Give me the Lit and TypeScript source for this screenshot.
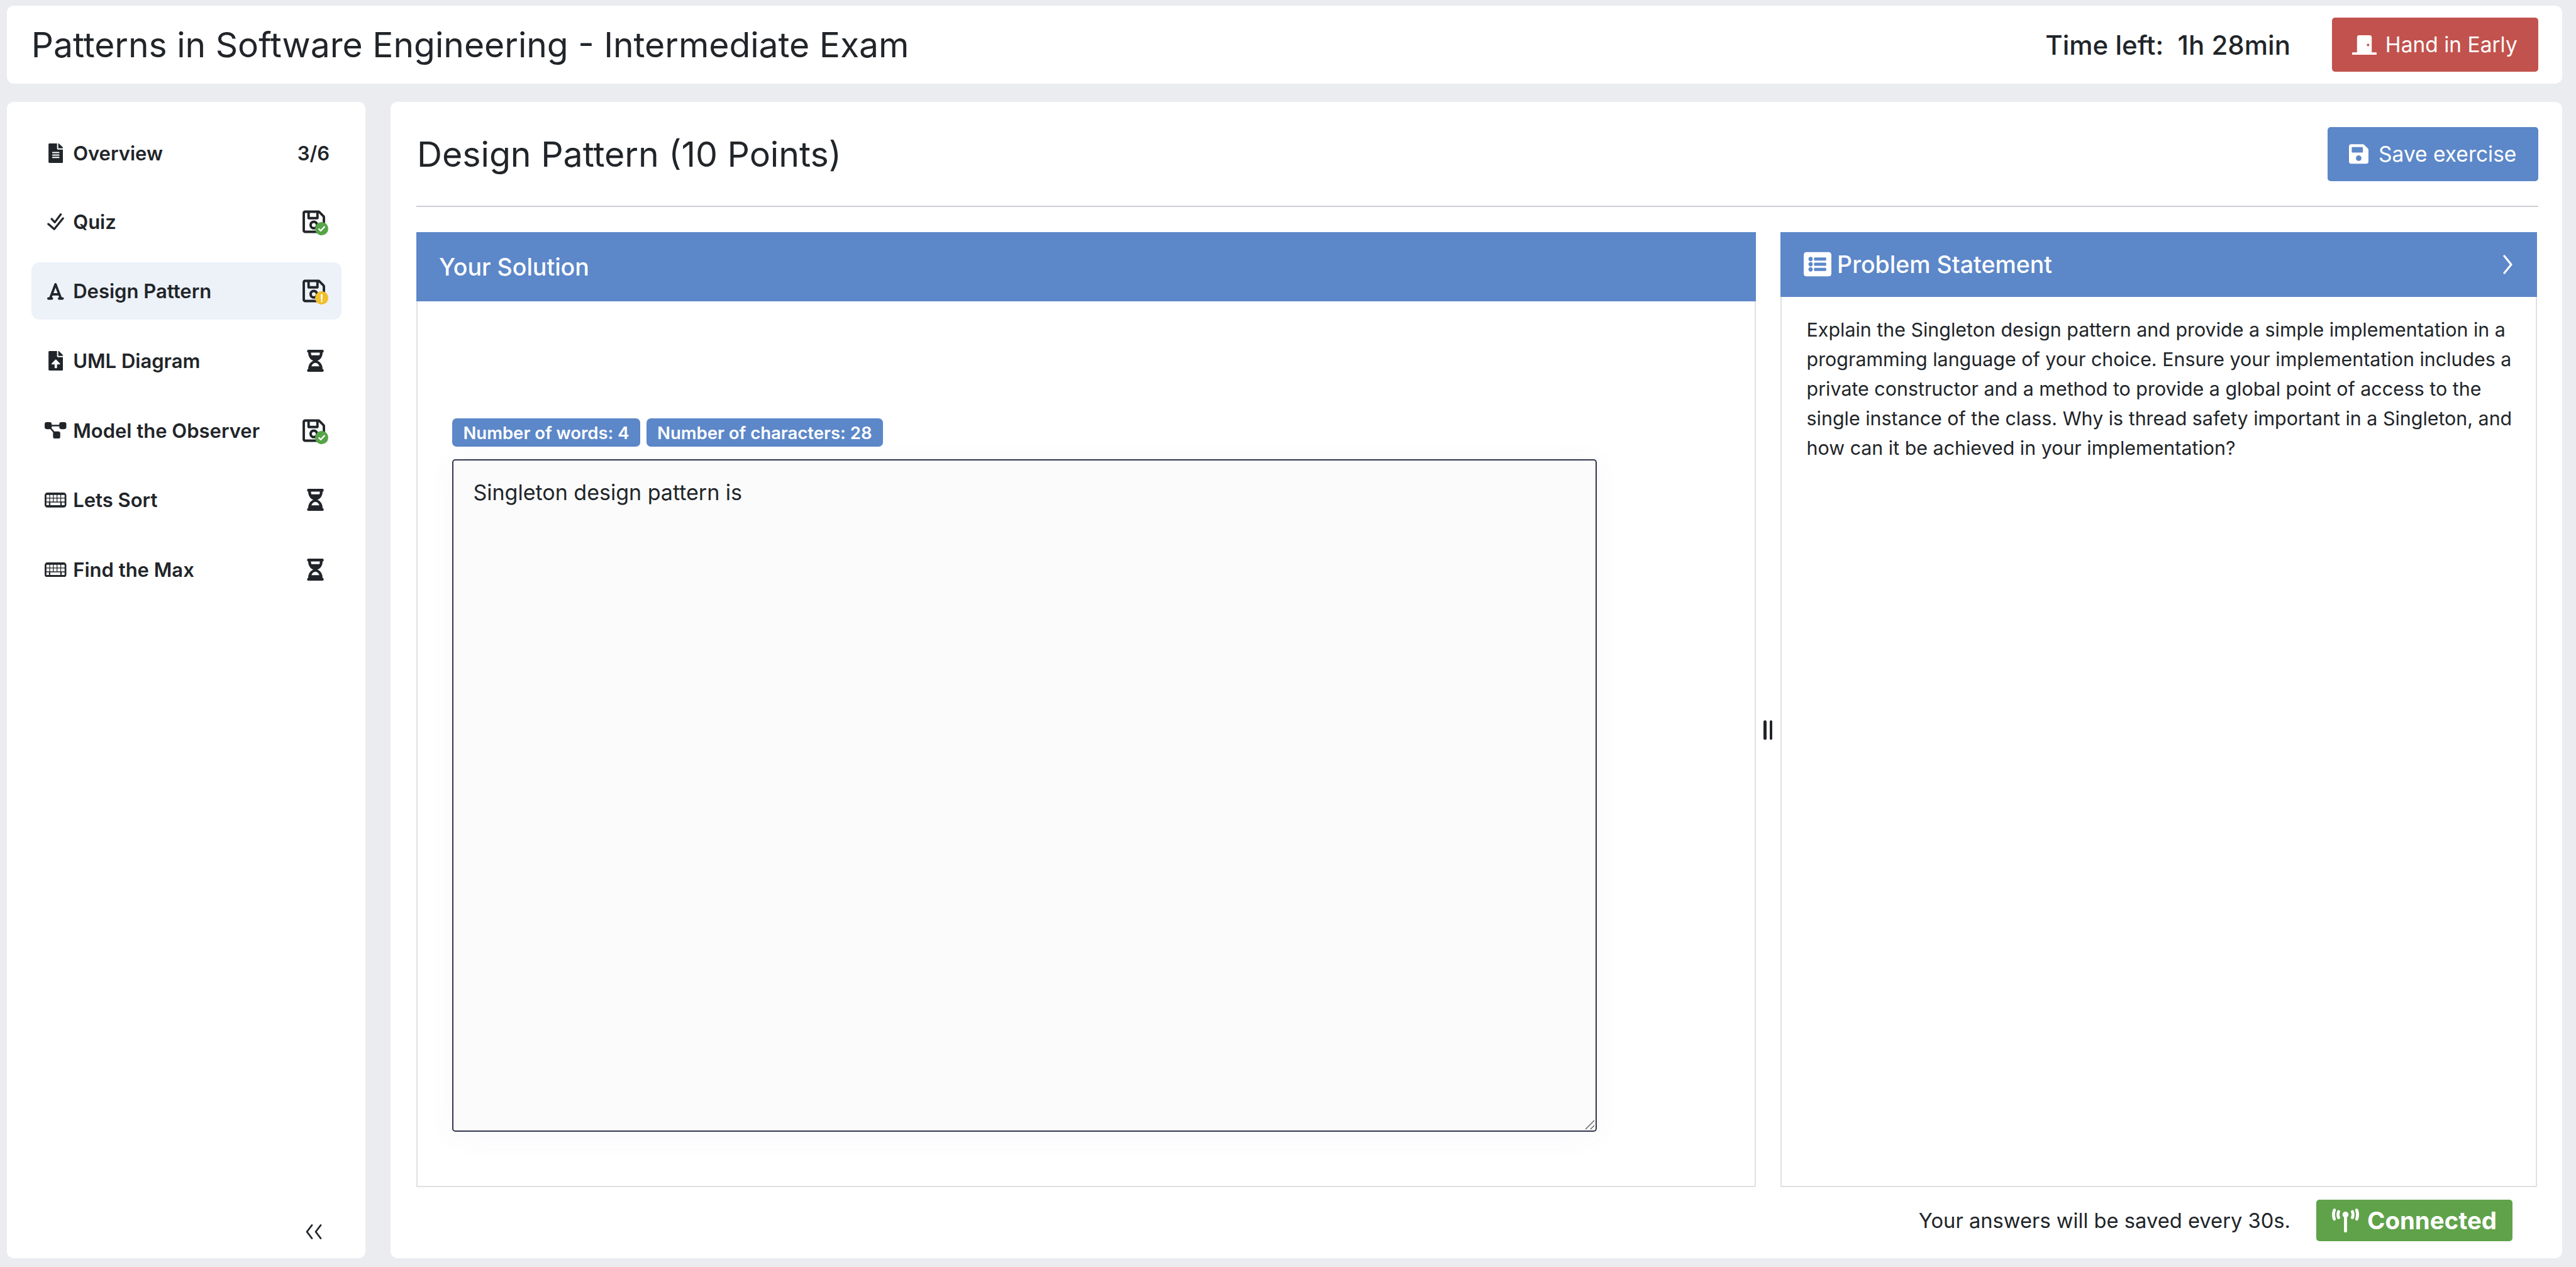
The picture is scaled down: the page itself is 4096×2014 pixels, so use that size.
import { LitElement, html, css } from "lit";
import { customElement } from "lit/decorators.js";

const P = {
  fileLines: "M224 136V0H24C10.7 0 0 10.7 0 24v464c0 13.3 10.7 24 24 24h336c13.3 0 24-10.7 24-24V160H248c-13.2 0-24-10.8-24-24zm64 236c0 6.6-5.4 12-12 12H108c-6.6 0-12-5.4-12-12v-8c0-6.6 5.4-12 12-12h168c6.6 0 12 5.4 12 12v8zm0-64c0 6.6-5.4 12-12 12H108c-6.6 0-12-5.4-12-12v-8c0-6.6 5.4-12 12-12h168c6.6 0 12 5.4 12 12v8zm0-72v8c0 6.6-5.4 12-12 12H108c-6.6 0-12-5.4-12-12v-8c0-6.6 5.4-12 12-12h168c6.6 0 12 5.4 12 12zm96-114.1v6.1H256V0h6.1c6.4 0 12.5 2.5 17 7l97.9 98c4.5 4.5 7 10.6 7 16.9z",
  fileUpload: "M224 136V0H24C10.7 0 0 10.7 0 24v464c0 13.3 10.7 24 24 24h336c13.3 0 24-10.7 24-24V160H248c-13.2 0-24-10.8-24-24zm65.18 216.01H224v80c0 8.84-7.16 16-16 16h-32c-8.84 0-16-7.16-16-16v-80H94.82c-14.28 0-21.41-17.29-11.27-27.36l96.42-95.7c6.65-6.61 17.39-6.61 24.04 0l96.42 95.7c10.15 10.07 3.03 27.36-11.25 27.36zM377 105L279.1 7c-4.5-4.5-10.6-7-17-7H256v128h128v-6.1c0-6.3-2.5-12.4-7-16.9z",
  font: "M254 52.8C249.3 40.3 237.3 32 224 32s-25.3 8.3-30 20.8L57.8 416H32c-17.7 0-32 14.3-32 32s14.3 32 32 32h96c17.7 0 32-14.3 32-32s-14.3-32-32-32h-1.8l18-48H303.8l18 48H320c-17.7 0-32 14.3-32 32s14.3 32 32 32h96c17.7 0 32-14.3 32-32s-14.3-32-32-32H390.2L254 52.8zM279.8 304H168.2L224 155.1 279.8 304z",
  hourglass: "M360 0H24C10.745 0 0 10.745 0 24v16c0 13.255 10.745 24 24 24 0 90.965 51.016 167.734 120.842 192C75.016 280.266 24 357.035 24 448c-13.255 0-24 10.745-24 24v16c0 13.255 10.745 24 24 24h336c13.255 0 24-10.745 24-24v-16c0-13.255-10.745-24-24-24 0-90.965-51.016-167.734-120.842-192C308.984 231.734 360 154.965 360 64c13.255 0 24-10.745 24-24V24c0-13.255-10.745-24-24-24zm-75.078 384H99.08c17.059-46.797 52.096-80 92.92-80 40.821 0 75.862 33.196 92.922 80zm.019-256H99.078C91.988 108.548 88 86.748 88 64h208c0 22.805-3.987 44.587-11.059 64z",
  saveReg: "M433.941 129.941l-83.882-83.882A48 48 0 0 0 316.118 32H48C21.49 32 0 53.49 0 80v352c0 26.51 21.49 48 48 48h352c26.51 0 48-21.49 48-48V163.882a48 48 0 0 0-14.059-33.941zM272 80v80H144V80h128zm122 352H54a6 6 0 0 1-6-6V86a6 6 0 0 1 6-6h42v104c0 13.255 10.745 24 24 24h176c13.255 0 24-10.745 24-24V83.882l78.243 78.243a6 6 0 0 1 1.757 4.243V426a6 6 0 0 1-6 6zM224 232c-48.523 0-88 39.477-88 88s39.477 88 88 88 88-39.477 88-88-39.477-88-88-88zm0 128c-22.056 0-40-17.944-40-40s17.944-40 40-40 40 17.944 40 40-17.944 40-40 40z",
  saveSolid: "M433.941 129.941l-83.882-83.882A48 48 0 0 0 316.118 32H48C21.49 32 0 53.49 0 80v352c0 26.51 21.49 48 48 48h352c26.51 0 48-21.49 48-48V163.882a48 48 0 0 0-14.059-33.941zM224 416c-35.346 0-64-28.654-64-64 0-35.346 28.654-64 64-64s64 28.654 64 64c0 35.346-28.654 64-64 64zm96-304.52V212c0 6.627-5.373 12-12 12H76c-6.627 0-12-5.373-12-12V108c0-6.627 5.373-12 12-12h228.52c3.183 0 6.235 1.264 8.485 3.515l3.48 3.48A11.996 11.996 0 0 1 320 111.48z",
  door: "M624 448H512V50.8C512 22.78 490.47 0 464 0H175.99c-26.47 0-48 22.78-48 50.8V448H16c-8.84 0-16 7.16-16 16v32c0 8.84 7.16 16 16 16h608c8.84 0 16-7.16 16-16v-32c0-8.84-7.16-16-16-16zM415.99 288c-17.67 0-32-14.33-32-32s14.33-32 32-32 32 14.33 32 32c0 17.67-14.33 32-32 32z",
  listAlt: "M464 480H48c-26.51 0-48-21.49-48-48V80c0-26.51 21.49-48 48-48h416c26.51 0 48 21.49 48 48v352c0 26.51-21.49 48-48 48zM128 120c-22.091 0-40 17.909-40 40s17.909 40 40 40 40-17.909 40-40-17.909-40-40-40zm0 96c-22.091 0-40 17.909-40 40s17.909 40 40 40 40-17.909 40-40-17.909-40-40-40zm0 96c-22.091 0-40 17.909-40 40s17.909 40 40 40 40-17.909 40-40-17.909-40-40-40zm288-136v-32c0-6.627-5.373-12-12-12H204c-6.627 0-12 5.373-12 12v32c0 6.627 5.373 12 12 12h200c6.627 0 12-5.373 12-12zm0 96v-32c0-6.627-5.373-12-12-12H204c-6.627 0-12 5.373-12 12v32c0 6.627 5.373 12 12 12h200c6.627 0 12-5.373 12-12zm0 96v-32c0-6.627-5.373-12-12-12H204c-6.627 0-12 5.373-12 12v32c0 6.627 5.373 12 12 12h200c6.627 0 12-5.373 12-12z",
  tower: "M80.3 44C69.8 69.9 64 98.2 64 128s5.8 58.1 16.3 84c6.6 16.4-1.3 35-17.7 41.7s-35-1.3-41.7-17.7C7.4 202.6 0 166.1 0 128S7.4 53.4 20.9 20C27.6 3.6 46.2-4.3 62.6 2.3S86.9 27.6 80.3 44zM555.1 20C568.6 53.4 576 89.9 576 128s-7.4 74.6-20.9 108c-6.6 16.4-25.3 24.3-41.7 17.7S489.1 228.4 495.7 212c10.5-25.9 16.3-54.2 16.3-84s-5.8-58.1-16.3-84C489.1 27.6 497 9 513.4 2.3s35 1.3 41.7 17.7zM352 128c0 23.7-12.9 44.4-32 55.4V480c0 17.7-14.3 32-32 32s-32-14.3-32-32V183.4c-19.1-11.1-32-31.7-32-55.4c0-35.3 28.7-64 64-64s64 28.7 64 64zM170.6 76.8C163.8 92.4 160 109.7 160 128s3.8 35.6 10.6 51.2c7.1 16.2-.3 35.1-16.5 42.1s-35.1-.3-42.1-16.5c-10.3-23.6-16-49.6-16-76.8s5.7-53.2 16-76.8c7.1-16.2 25.9-23.6 42.1-16.5s23.6 25.9 16.5 42.1zM464 51.2c10.3 23.6 16 49.6 16 76.8s-5.7 53.2-16 76.8c-7.1 16.2-25.9 23.6-42.1 16.5s-23.6-25.9-16.5-42.1c6.8-15.6 10.6-33 10.6-51.2s-3.8-35.6-10.6-51.2c-7.1-16.2 .3-35.1 16.5-42.1s35.1 .3 42.1 16.5z",
};

const fa = (cls: string, vb: string, d: string) =>
  html`<svg class=${cls} viewBox=${vb} aria-hidden="true"><path fill="currentColor" d=${d}></path></svg>`;

const checkDouble = html`<svg class="i-check" viewBox="0 0 30 30" aria-hidden="true"><path fill="none" stroke="currentColor" stroke-width="3.6" stroke-linecap="round" stroke-linejoin="round" d="M8 10l5.5 6L24 2M2 19l10.5 9L28 9"></path></svg>`;

const diagram = html`<svg class="i-diagram" viewBox="0 0 114 87" aria-hidden="true">
  <g fill="currentColor"><rect width="37" height="37" rx="11"></rect><rect x="77" width="37" height="37" rx="11"></rect><rect x="44" y="49" width="38" height="38" rx="11"></rect></g>
  <path d="M18 18H96M25 25L55 60" fill="none" stroke="currentColor" stroke-width="8"></path>
</svg>`;

const keyboardKeys = html`<svg class="i-keyboard" viewBox="0 0 112 77" aria-hidden="true">
  <path fill="currentColor" fill-rule="evenodd" d="M14 0H98A14 14 0 0 1 112 14V63A14 14 0 0 1 98 77H14A14 14 0 0 1 0 63V14A14 14 0 0 1 14 0Z
    M9 12h15v15H9Z M28 12h15v15H28Z M47 12h15v15H47Z M66 12h15v15H66Z M85 12h18v15H85Z
    M9 31h15v15H9Z M28 31h15v15H28Z M47 31h15v15H47Z M66 31h15v15H66Z M85 31h18v15H85Z
    M9 51h13v14H9Z M29 51h52v14H29Z M88 51h15v14H88Z"></path>
</svg>`;

const saved = (kind: "ok" | "warn") => html`<span class="save-wrap">
  ${fa("i-save", "0 0 448 512", P.saveReg)}
  ${kind === "ok"
    ? html`<svg class="dot" viewBox="0 0 22 22" aria-hidden="true"><circle cx="11" cy="11" r="11" fill="#56a447"></circle><path d="M6.5 11.5l3 3 6-6.5" fill="none" stroke="#fff" stroke-width="2.4" stroke-linecap="round" stroke-linejoin="round"></path></svg>`
    : html`<svg class="dot" viewBox="0 0 22 22" aria-hidden="true"><circle cx="11" cy="11" r="11" fill="#f0bf2b"></circle><path d="M11 5.5v7.5M11 16.4v.4" fill="none" stroke="#fff" stroke-width="2.8" stroke-linecap="round"></path></svg>`}
</span>`;

const hourglass = fa("i-hour", "0 0 384 512", P.hourglass);

const items = [
  { icon: fa("i-file", "0 0 384 512", P.fileLines), label: "Overview", end: html`<span class="count">3/6</span>` },
  { icon: checkDouble, label: "Quiz", end: saved("ok") },
  { icon: fa("i-font", "0 0 448 512", P.font), label: "Design Pattern", end: saved("warn"), active: true },
  { icon: fa("i-file", "0 0 384 512", P.fileUpload), label: "UML Diagram", end: hourglass },
  { icon: diagram, label: "Model the Observer", end: saved("ok") },
  { icon: keyboardKeys, label: "Lets Sort", end: hourglass },
  { icon: keyboardKeys, label: "Find the Max", end: hourglass },
];

@customElement("app-root")
export class AppRoot extends LitElement {
  static styles = css`
    :host {
      display: block;
      width: 4096px;
      height: 2014px;
      overflow: hidden;
      background: #ebecf0;
      color: #212529;
      font-family: Inter, "Liberation Sans", sans-serif;
    }
    * { box-sizing: border-box; }
    .page {
      display: flex;
      flex-direction: column;
      gap: 29px;
      height: 100%;
      padding: 9px 22.5px 14px 11px;
    }
    .card { background: #fff; border-radius: 11px; }
    .top {
      flex: none;
      height: 124px;
      display: flex;
      align-items: center;
      padding: 0 38px 0 38.7px;
    }
    .top h1 { margin: 0; flex: 1; font-size: 55.2px; font-weight: 400; line-height: 1.2; white-space: nowrap; }
    .time { font-size: 42px; font-weight: 500; margin-right: 65.6px; white-space: pre; }
    .btn {
      display: flex;
      align-items: center;
      justify-content: center;
      height: 86px;
      border-radius: 5px;
      color: #fff;
      font-size: 33.5px;
      white-space: nowrap;
    }
    .btn-red { width: 328px; background: #c2524d; gap: 13.5px; }
    .btn-blue { width: 334.5px; background: #5c87c9; gap: 16px; }
    .i-door { width: 39px; height: 35px; }
    .i-solid { width: 31px; height: 35.5px; }
    .row { flex: 1; min-height: 0; display: flex; gap: 39.6px; }
    .side {
      flex: none;
      width: 570px;
      display: flex;
      flex-direction: column;
      gap: 19.7px;
      padding: 38px 38px 30px 38.7px;
    }
    .item {
      flex: none;
      height: 91px;
      display: flex;
      align-items: center;
      padding: 0 21.6px;
      border-radius: 13px;
      font-size: 31px;
      font-weight: 600;
      white-space: nowrap;
    }
    .item:first-child { height: 87px; }
    .item.active { background: #edf1f8; }
    .ico { flex: none; width: 34.5px; margin-right: 10.4px; display: flex; justify-content: center; align-items: center; }
    .label { flex: 1; }
    .end { flex: none; width: 40px; display: flex; justify-content: center; align-items: center; }
    .count { font-size: 31px; font-weight: 600; margin-right: 6px; }
    .i-file { width: 23.5px; height: 31px; }
    .i-check { width: 27px; height: 27px; }
    .i-font { width: 26.5px; height: 30.3px; }
    .i-diagram { width: 34.5px; height: 26.3px; }
    .i-keyboard { width: 34.5px; height: 23.7px; }
    .i-hour { width: 27px; height: 35px; }
    .save-wrap { position: relative; display: flex; margin-right: 4px; }
    .i-save { width: 36px; height: 41px; }
    .dot { position: absolute; width: 21px; height: 21px; right: -4.5px; bottom: -1px; }
    .collapse { margin-top: auto; display: flex; justify-content: flex-end; padding-right: 30.6px; }
    .i-collapse { width: 28px; height: 24px; }
    .main {
      flex: 1;
      min-width: 0;
      display: flex;
      flex-direction: column;
      padding: 0 38px 0 41.4px;
    }
    .head {
      flex: none;
      height: 167px;
      display: flex;
      align-items: center;
      justify-content: space-between;
      border-bottom: 2px solid #cdd0d5;
    }
    .head h2 { margin: 2px 0 0 1px; font-size: 55.4px; font-weight: 400; line-height: 1.2; white-space: nowrap; }
    .panels { flex: none; height: 1517.5px; margin: 40px 2px 0 0; display: flex; }
    .solution {
      flex: none;
      width: 2129.6px;
      display: flex;
      flex-direction: column;
      border: 2px solid #dee2e6;
      border-top: 0;
    }
    .bar {
      flex: none;
      display: flex;
      align-items: center;
      background: #5c87c9;
      color: #fff;
      font-weight: 500;
      font-size: 37.5px;
      white-space: nowrap;
    }
    .solution .bar { height: 110px; margin: 0 -2px; padding-left: 36px; }
    .sol-body { padding: 186px 0 0 55.5px; }
    .badges { display: flex; gap: 10.5px; height: 45px; }
    .badge {
      display: flex;
      align-items: center;
      padding: 0 17px;
      border-radius: 7px;
      background: #5c87c9;
      color: #fff;
      font-size: 27.5px;
      font-weight: 600;
      white-space: nowrap;
    }
    .area { position: relative; width: 1820px; margin-top: 20px; }
    textarea {
      display: block;
      width: 100%;
      height: 1069px;
      padding: 25px 31px;
      border: 2px solid #33364e;
      border-radius: 5px;
      outline: none;
      resize: none;
      background: #fbfbfb;
      color: #212529;
      font: 400 34px/1.5 Inter, "Liberation Sans", sans-serif;
      box-shadow: 0 6px 46px rgba(90, 90, 170, 0.05);
    }
    .resize { position: absolute; right: 3px; bottom: 3px; width: 16px; height: 16px; }
    .split {
      flex: none;
      width: 39.5px;
      display: flex;
      align-items: center;
      justify-content: center;
      gap: 5px;
      padding-top: 65px;
    }
    .grip { width: 4.5px; height: 31px; border-radius: 3px; background: #212529; }
    .problem {
      flex: 1;
      min-width: 0;
      display: flex;
      flex-direction: column;
      border: 2px solid #dee2e6;
      border-top: 0;
    }
    .problem .bar {
      height: 102.5px;
      margin: 0 -2px;
      padding: 0 36px 0 37px;
    }
    .i-list { width: 44px; height: 44px; margin-right: 9px; }
    .bar-title { flex: 1; }
    .i-chev { width: 20px; height: 31px; }
    .statement {
      margin: 0;
      padding: 29px 30px 0 39.5px;
      font-size: 30.4px;
      line-height: 47px;
    }
    .foot {
      flex: 1;
      display: flex;
      align-items: flex-start;
      justify-content: flex-end;
      gap: 41px;
      padding: 20px 40.5px 0 0;
    }
    .note { line-height: 66.5px; font-size: 32.7px; white-space: nowrap; }
    .conn {
      width: 312px;
      height: 66.5px;
      display: flex;
      align-items: center;
      justify-content: center;
      gap: 13px;
      border-radius: 5px;
      background: #60a24a;
      color: #fff;
      font-size: 38.4px;
      font-weight: 700;
      white-space: nowrap;
    }
    .i-tower { width: 43px; height: 38.5px; }
  `;

  render() {
    return html`<div class="page">
      <header class="card top">
        <h1>Patterns in Software Engineering - Intermediate Exam</h1>
        <span class="time">Time left:&nbsp; 1h 28min</span>
        <div class="btn btn-red">${fa("i-door", "0 0 640 512", P.door)}<span>Hand in Early</span></div>
      </header>
      <div class="row">
        <nav class="card side">
          ${items.map(
            (it) => html`<div class="item ${it.active ? "active" : ""}">
              <span class="ico">${it.icon}</span>
              <span class="label">${it.label}</span>
              <span class="end">${it.end}</span>
            </div>`
          )}
          <div class="collapse">
            <svg class="i-collapse" viewBox="0 0 28 24" aria-hidden="true"><path fill="none" stroke="currentColor" stroke-width="2.8" stroke-linecap="round" stroke-linejoin="round" d="M12 1.5L4 12l8 10.5M26 1.5L18 12l8 10.5"></path></svg>
          </div>
        </nav>
        <main class="card main">
          <div class="head">
            <h2>Design Pattern (10 Points)</h2>
            <div class="btn btn-blue">${fa("i-solid", "0 0 448 512", P.saveSolid)}<span>Save exercise</span></div>
          </div>
          <div class="panels">
            <section class="solution">
              <div class="bar">Your Solution</div>
              <div class="sol-body">
                <div class="badges">
                  <span class="badge">Number of words: 4</span>
                  <span class="badge">Number of characters: 28</span>
                </div>
                <div class="area">
                  <textarea .value=${"Singleton design pattern is"}></textarea>
                  <svg class="resize" viewBox="0 0 16 16" aria-hidden="true"><path d="M1 15L15 1M9 15l6-6" fill="none" stroke="#555" stroke-width="1.3"></path></svg>
                </div>
              </div>
            </section>
            <div class="split"><span class="grip"></span><span class="grip"></span></div>
            <section class="problem">
              <div class="bar">
                ${fa("i-list", "0 0 512 512", P.listAlt)}
                <span class="bar-title">Problem Statement</span>
                <svg class="i-chev" viewBox="0 0 20 31" aria-hidden="true"><path fill="none" stroke="currentColor" stroke-width="3.2" stroke-linecap="round" stroke-linejoin="round" d="M4 2l11 13.5L4 29"></path></svg>
              </div>
              <p class="statement">Explain the Singleton design pattern and provide a simple implementation in a programming language of your choice. Ensure your implementation includes a private constructor and a method to provide a global point of access to the single instance of the class. Why is thread safety important in a Singleton, and how can it be achieved in your implementation?</p>
            </section>
          </div>
          <div class="foot">
            <span class="note">Your answers will be saved every 30s.</span>
            <div class="conn">${fa("i-tower", "0 0 576 512", P.tower)}<span>Connected</span></div>
          </div>
        </main>
      </div>
    </div>`;
  }
}
